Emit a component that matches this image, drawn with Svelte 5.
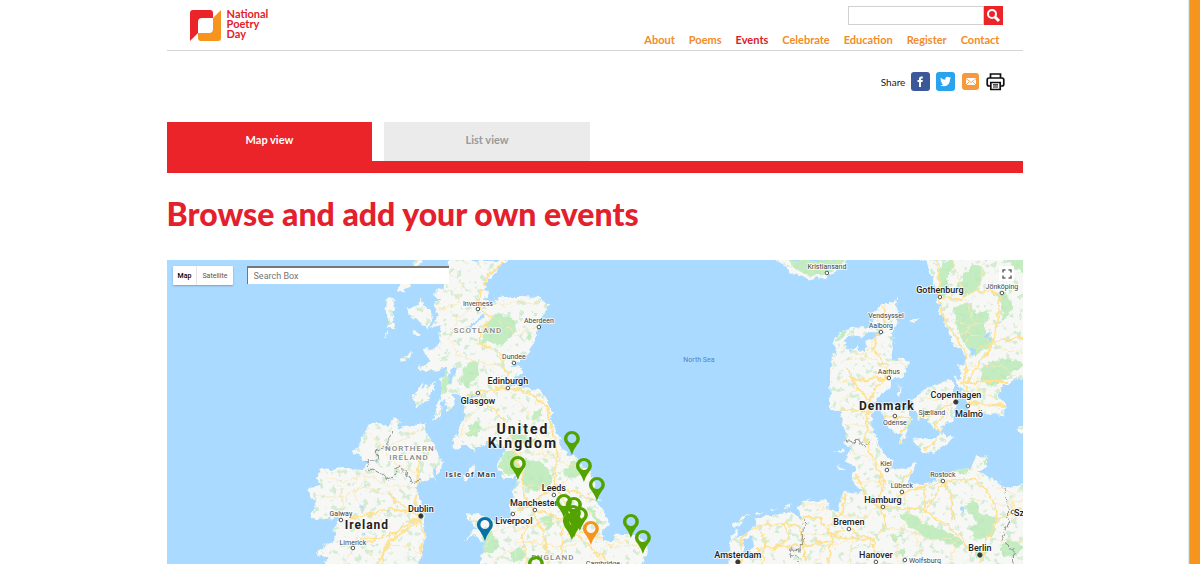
<script lang="ts">
  const nav = ['About', 'Poems', 'Events', 'Celebrate', 'Education', 'Register', 'Contact'];
  let view = $state('Map view');

  // Landmasses, one closed outline each
  const land = [
    // Great Britain
    'M448 260H510L500 266 492 277 485 285 483 290 490 291 484 300 492 301 503 297 520 297 540 298 548 304 548 310 541 320 537 335 530 350 520 362 512 366 522 368 524 374 515 378 502 383 520 387 538 391 545 396 550 408 553 425 560 438 563 449 572 456 580 460 590 472 595 483 597 498 603 502 586 497 600 505 606 515 608 525 603 532 604 540 612 540 614 535 630 533 642 537 648 548 647 556 640 566H480L484 550 484 543 475 535 463 541 466 537 478 528 470 521 467 515 478 513 488 520 500 520 512 515 511 505 512 490 517 487 516 478 520 473 512 478 505 478 499 470 497 462 502 455 508 447 500 446 490 442 480 445 475 452 467 444 455 450 452 440 458 434 461 425 466 415 464 408 467 400 458 393 453 397 454 408 448 411 446 398 442 402 441 414 434 420 437 405 443 390 440 382 447 365 438 372 420 370 418 366 431 362 425 355 423 350 436 348 442 343 438 335 442 325 432 326 438 315 433 303 441 300 434 295 438 288 446 290 446 278Z',
    // Western isles and Skye
    'M416 260H423L418 268 408 271ZM408 274L416 278 404 293 398 290ZM386 298L396 300 393 313 394 328 388 329 387 312ZM407 308L417 306 421 298 426 307 433 315 427 330 419 322 410 316ZM401 359L413 352 411 358 402 362ZM415 330L421 333 419 337 415 335ZM385 334L389 332 386 337ZM416 393L424 382 422 390 436 380 433 393 426 403 416 407 413 399Z',
    // Isle of Man
    'M463 477L470 468 475 465 473 475 467 480Z',
    // Ireland
    'M373 423L386 426 395 418 401 423 397 430 410 425 425 425 428 435 434 445 437 455 443 462 441 470 436 475 437 465 432 472 435 479 420 482 415 488 420 500 422 510 425 520 426 535 423 545 420 566H320L330 560 316 553 323 547 337 538 333 528 342 516 325 520 313 517 312 510 317 503 309 495 310 488 321 485 316 477 322 468 335 470 343 468 363 470 367 462 358 455 350 451 360 447 358 440 365 432Z',
    // Norway and Sweden
    'M773 260L787 266 790 273 810 280 827 277 843 267 848 260ZM920 260L927 263 932 277 937 292 940 312 947 327 953 343 963 352 967 365 957 363 962 377 955 378 960 387 967 398 967 412 973 417 987 413 1003 415 1007 408 998 395 1002 388 1013 380 1026 378V258Z',
    // Jutland and the continental coast
    'M901 295L895 302 898 310 897 322 892 330 893 348 891 359 903 359 909 363 907 370 900 378 892 380 889 388 877 398 873 408 872 418 874 432 878 442 883 454 895 460 890 468 908 470 915 460 918 464 913 472 907 483 923 485 943 477 953 470 973 468 975 455 987 457 987 467 977 472 993 478 1003 488 1026 485V566H728L730 550 732 537 736 528 738 539 752 529 755 521 767 516 793 512 797 519 803 518 798 508 802 502 827 500 829 510 837 512 842 493 863 492 853 483 852 475 856 468 847 462 848 453 852 448 843 442 847 440 843 422 840 412 830 407 832 352 838 356 833 343 840 333 850 328 867 327 873 318 877 310 883 303 892 303Z',
    // Danish islands
    'M882 406L900 405 908 410 912 420 905 435 893 432 885 420ZM912 400L927 388 947 380 954 384 950 393 959 400 953 415 952 422 943 425 940 435 928 421 917 418ZM912 440L933 438 940 434 955 437 942 448 935 453 923 452ZM909 321L918 317 914 323ZM899 384L902 397 899 396ZM899 443L907 430 902 445ZM1018 427L1026 422V436L1018 432Z',
    // Frisian islands
    'M733 525L741 518 752 514 742 521 735 528ZM754 513L764 511 758 515ZM769 511L778 509 772 512ZM784 507L793 505 786 509ZM806 500L812 498 808 501ZM843 449L835 451 844 452ZM838 465L844 469 839 469Z'
  ];

  const woods = [
    'M490 318L500 314 514 320 517 330 509 340 498 345 488 342 479 345 484 332Z',
    'M463 366L474 361 480 366 477 378 467 388 461 380Z', 'M444 371L454 376 448 387 443 396 441 385Z',
    'M470 427L477 422 483 431 477 436 466 436Z', 'M512 432L526 436 538 440 526 446 514 441Z',
    'M500 455L512 449 520 458 517 473 506 476 499 466Z', 'M524 459L541 462 553 475 550 485 532 492 522 480Z',
    'M534 411L543 408 540 417 532 421Z', 'M564 469L572 462 585 466 577 477 565 476Z',
    'M543 518L554 514 554 527 545 532Z', 'M483 534L490 530 500 544 494 553 484 553Z',
    'M508 554L522 548 525 557 513 563Z', 'M588 508L594 509 604 526 596 522Z',
    'M506 290L512 287 511 292ZM525 338L533 332 530 341Z',
    'M787 260H846L838 268 824 274 811 276 797 270Z',
    'M937 277L944 260 954 263 947 280 951 293 944 298ZM963 277L973 263 985 270 978 290 967 298 956 288ZM952 308L970 303 976 315 990 308 984 331 995 343 976 355 963 341 957 328ZM984 365L1005 359 1024 363 1010 374 993 386 981 382ZM990 290L1007 293 1013 310 1001 324 1003 304ZM1002 260H1024V273Z',
    'M834 343L842 332 850 329 841 338ZM838 413L842 420 838 416ZM839 430L843 434 840 438Z',
    'M898 513L910 514 923 522 936 528 952 534 964 543 958 548 942 541 926 538 908 525Z',
    'M963 505L976 501 981 513 997 520 995 535 980 540 969 529 978 523Z',
    'M889 534L902 535 896 544ZM1000 545L1013 539 1024 546 1017 557 1003 556ZM975 549L987 553 976 560ZM899 551L905 548 903 560ZM953 470L964 465 973 469 962 474ZM981 459L988 457 985 466Z'
  ];

  const lakes = [
    'M844 340L852 335 864 337 872 332 884 333 868 341 864 353 856 347 851 353 846 347Z',
    'M743 541L752 536 754 545 749 552 752 560 742 556 745 549Z',
    'M985 336L991 330 989 345ZM970 348L977 352 971 355ZM960 507L966 508 962 515Z',
    'M373 458L379 460 376 465ZM360 503L364 509 361 513ZM388 508L391 511 388 513ZM363 534L367 531 365 537Z',
    'M482 313L469 328 471 329 485 315ZM453 366L447 382 450 383 457 367ZM467 401L472 394 480 397 470 398Z'
  ];

  const highways = [
    'M502 264L490 275 483 287 478 305 490 318 478 341 500 354 507 372 504 388 478 392 464 396M504 388L528 392 547 405 552 432 558 455 554 475 557 490 566 505 563 524 560 564',
    'M478 393L489 405 505 422 513 438 516 460 524 477 524 495 535 515 543 530 548 564M510 514L530 506 553 488 580 493 596 500M514 504L540 511 562 519M535 515L522 535 526 564M566 505L572 530 588 545 610 564M566 535L582 531 604 538',
    'M342 520L365 516 388 508 419 514M419 514L404 507 388 494M420 512L415 499 417 482 419 459 428 454M419 518L396 532 380 538 360 539M396 532L377 564M419 520L386 545 381 564M420 520L425 535 420 553M339 544L353 547 376 540',
    'M883 304L885 321 876 337 875 351 887 366 885 378 873 391 869 405 866 431 866 440 872 455 880 474 882 505M871 400L858 389 850 373 856 380 880 378 889 378M840 409L868 412 890 416 916 419 938 412 956 401M848 368L853 381M940 436L937 425 942 415M910 423L900 433 901 445M925 449L936 441',
    'M937 260L939 282 939 298 943 318 956 337 965 350 967 365 963 383 972 397 968 408M939 298L960 299 978 290 1000 293 998 325 990 348 975 371 967 382M971 403L1006 406M965 382L1010 382 1024 380M976 349L1001 340 1023 338',
    'M882 507L903 492 943 482 972 479 985 488 996 507 995 527 985 544 980 564M882 507L926 510 945 525 960 535 972 553M883 507L885 525 873 540 832 536 820 519 801 517M872 540L849 529 831 536 829 564M882 507L867 500 856 475M943 482L951 495 955 520M882 474L885 490M903 493L926 487 923 510M902 480L911 472M845 493L842 513 829 525',
    'M740 564L742 535 757 525 784 524 790 538 776 547 757 549M784 523L800 527 806 560M755 524L766 540 762 564M776 547L804 546 829 541M997 521L1024 508M873 540L876 564M942 485L926 510'
  ];
  const lanes = [
    'M450 273L463 282 458 302 440 310M477 305L458 319 449 337 456 355 478 362 501 366M478 305L503 303 540 302M539 326L516 336 499 321M505 388L527 411 536 431 551 439M480 404L468 419 458 437M505 423L482 430 460 434M536 431L545 455 558 460 578 468M500 444L516 452 542 455 562 454M512 488L532 486 554 488 573 478M505 519L492 533 485 548M507 528L527 528 548 522 566 520 586 517M515 543L539 542 568 547 591 535 615 547 642 546M495 561L514 548 520 564M600 564L606 545 630 541M560 510L594 514',
    'M370 433L383 447 403 439 420 430M382 446L395 463 418 474M325 479L347 481 368 475 390 486 416 488M337 479L343 500 342 520M319 495L335 498 364 488 388 493M365 514L354 494 367 475M353 547L361 526 388 509M353 547L344 564M387 545L411 546 421 555M358 540L373 557',
    'M840 362L856 358 875 360 888 374M837 382L851 381M858 389L842 397 841 410M868 425L847 426M891 360L907 365M838 345L864 355 876 337M920 397L937 400 954 393M918 410L938 412M946 395L947 420M968 391L1001 397M978 377L979 410M944 318L968 324 998 324M950 332L978 335 1000 348 1023 354M970 365L1002 366 1016 376M953 263L962 289 973 318 965 342M985 260L979 290',
    'M844 450L865 456 880 466M854 483L882 481M801 505L826 505M804 534L832 535M808 520L824 508 841 513 859 518 883 505M814 564L829 545 850 540 861 524M853 538L848 564M902 490L910 513 896 535 899 564M885 527L907 531 934 541 959 535M923 513L916 537 925 564M947 489L966 502 982 500M958 535L949 564M979 473L979 487M995 487L1013 493 1014 520M990 505L1024 502M996 540L1024 541'
  ];
  const borders = [
    'M391 433L388 438 388 447 374 451 380 457 372 459 366 462 369 468 374 471 383 476 390 479 396 473 395 467 400 466 406 471 411 482 420 480',
    'M845 440L852 442 860 441 864 446 870 441',
    'M805 519L803 532 801 550 790 549 789 555 797 557 799 564M1004 489L1008 505 1009 520 1001 539 1013 549 1014 564'
  ];

  type Place = { t: string; x: number; y: number; k: string; dot?: [number, number]; cap?: boolean };
  const places: Place[] = [
    { t: 'Inverness', x: 478, y: 306, k: 'town', dot: [478, 309] },
    { t: 'Aberdeen', x: 539, y: 323, k: 'town', dot: [539, 327] },
    { t: 'Dundee', x: 514, y: 359, k: 'town', dot: [514, 363] },
    { t: 'SCOTLAND', x: 478, y: 333, k: 'region' },
    { t: 'Edinburgh', x: 508, y: 384, k: 'city', dot: [508, 388] },
    { t: 'Glasgow', x: 478, y: 404, k: 'city', dot: [478, 393] },
    { t: 'United', x: 523, y: 434, k: 'country big' },
    { t: 'Kingdom', x: 523, y: 448, k: 'country big' },
    { t: 'NORTHERN', x: 410, y: 451, k: 'region' },
    { t: 'IRELAND', x: 409, y: 460, k: 'region' },
    { t: 'Isle of Man', x: 471, y: 477, k: 'isle' },
    { t: 'Leeds', x: 554, y: 491, k: 'city', dot: [554, 495] },
    { t: 'Manchester', x: 534, y: 506, k: 'city', dot: [535, 510] },
    { t: 'Liverpool', x: 514, y: 524, k: 'city', dot: [513, 514] },
    { t: 'ENGLAND', x: 553, y: 560, k: 'region' },
    { t: 'Cambridge', x: 603, y: 566, k: 'town' },
    { t: 'Dublin', x: 421, y: 512, k: 'city', dot: [421, 516], cap: true },
    { t: 'Galway', x: 341, y: 516, k: 'town', dot: [341, 520] },
    { t: 'Ireland', x: 367, y: 529, k: 'country' },
    { t: 'Limerick', x: 353, y: 545, k: 'town', dot: [353, 548] },
    { t: 'North Sea', x: 699, y: 362, k: 'sea' },
    { t: 'Kristiansand', x: 827, y: 269, k: 'town', dot: [827, 273] },
    { t: 'Gothenburg', x: 940, y: 293, k: 'city', dot: [940, 297] },
    { t: 'Jönköping', x: 1002, y: 289, k: 'town', dot: [1002, 293] },
    { t: 'Vendsyssel', x: 886, y: 318, k: 'town' },
    { t: 'Aalborg', x: 881, y: 328, k: 'town', dot: [881, 332] },
    { t: 'Aarhus', x: 889, y: 374, k: 'town', dot: [889, 378] },
    { t: 'Denmark', x: 887, y: 410, k: 'country' },
    { t: 'Odense', x: 895, y: 425, k: 'town', dot: [895, 416] },
    { t: 'Sjælland', x: 932, y: 415, k: 'town' },
    { t: 'Copenhagen', x: 956, y: 398, k: 'city', dot: [956, 402], cap: true },
    { t: 'Malmö', x: 969, y: 417, k: 'city', dot: [968, 406] },
    { t: 'Kiel', x: 886, y: 466, k: 'town', dot: [887, 470] },
    { t: 'Rostock', x: 943, y: 477, k: 'town', dot: [943, 481] },
    { t: 'Lübeck', x: 902, y: 488, k: 'town', dot: [902, 492] },
    { t: 'Hamburg', x: 883, y: 503, k: 'city', dot: [883, 507] },
    { t: 'Bremen', x: 849, y: 525, k: 'city', dot: [849, 529] },
    { t: 'Hanover', x: 876, y: 558, k: 'city', dot: [876, 562] },
    { t: 'Wolfsburg', x: 925, y: 563, k: 'town', dot: [905, 560] },
    { t: 'Berlin', x: 980, y: 551, k: 'city', dot: [980, 555], cap: true },
    { t: 'Amsterdam', x: 738, y: 558, k: 'city', dot: [738, 562], cap: true },
    { t: 'Szczecin', x: 1032, y: 516, k: 'city', dot: [1013, 512] }
  ];

  // Point of each event pin
  const green = '#53a300';
  const pins: [number, number, string][] = [
    [572, 454, green], [518, 479, green], [584, 481, green], [597, 500, green],
    [574, 520, green], [564, 517, green], [573, 528, green], [580, 530, green], [571, 536, green], [574, 537, green], [572, 539, green],
    [631, 537, green], [643, 553, green], [536, 579, green],
    [591, 544, '#f7941e'], [485, 540, '#0a70a8']
  ];
</script>

<div class="page">
  <div class="content">
    <header>
      <a class="logo" href="#home" aria-label="National Poetry Day">
        <svg width="33" height="33" viewBox="0 0 33 33" aria-hidden="true">
          <path fill="#ea2429" d="M4 1H21Q24 1 24 4V9H13Q9 9 9 13V24L1 32V4Q1 1 4 1Z" />
          <path fill="#f7941e" d="M32 1V29Q32 32 29 32H12Q9 32 9 29V24H20Q24 24 24 20V9Z" />
        </svg>
        <span>National<br />Poetry<br />Day</span>
      </a>
      <div class="tools">
        <form class="search" role="search" onsubmit={(e) => e.preventDefault()}>
          <input type="search" aria-label="Search the site" />
          <button aria-label="Search">
            <svg width="19" height="19" viewBox="0 0 19 19" fill="none" stroke="#fff">
              <circle cx="8" cy="8" r="4" stroke-width="2" />
              <path d="M11 11L15 15" stroke-width="3" />
            </svg>
          </button>
        </form>
        <nav>
          {#each nav as item}
            <a href="#{item.toLowerCase()}" class:current={item === 'Events'}>{item}</a>
          {/each}
        </nav>
      </div>
    </header>

    <div class="share">
      <span>Share</span>
      <a href="#facebook" aria-label="Facebook"><svg viewBox="0 0 19 19"><rect width="19" height="19" rx="3" fill="#3b5998" /><path fill="#fff" d="M8 15V10H6.500V8H8V6.700Q8 4.500 10.300 4.500H11.800V6.400H10.800Q10 6.400 10 7.200V8H11.800L11.500 10H10V15Z" /></svg></a>
      <a href="#twitter" aria-label="Twitter"><svg viewBox="0 0 19 19"><rect width="19" height="19" rx="3" fill="#2aa3ef" /><path fill="#fff" d="M4.500 5.500Q6.500 7.700 9.300 7.700 9 5 11.500 4.800 12.500 4.800 13.200 5.500L14.700 5 14 6.300 15 6.100 14 7.300Q14 14 8 14.200 6 14.200 4.300 13.200 6.300 13.200 7.300 12.300 5.700 12 5.300 10.700H6.300Q4.600 10 4.600 8.300L5.600 8.600Q4.100 7.400 4.500 5.500Z" /></svg></a>
      <a href="#email" aria-label="Email"><svg viewBox="0 0 19 19"><rect x="1" y="1" width="17" height="17" rx="3" fill="#f7993a" /><rect x="5" y="6" width="10" height="7" rx="1" fill="#fff" /><path d="M5 6.500L10 10.500 15 6.500M5 13L8.500 9.500M15 13L11.500 9.500" fill="none" stroke="#f7993a" stroke-width=".8" /></svg></a>
      <button class="print" aria-label="Print"><svg viewBox="0 0 19 19" fill="none" stroke="#111" stroke-width="1.700"><path d="M4.500 6V2H14.500V6M4 14H3Q1.200 14 1.200 12V8Q1.200 6 3 6H16Q17.800 6 17.800 8V12Q17.800 14 16 14H15" /><path d="M4.800 10.500H14.200V17.500H4.800Z" /><path d="M7 12.800H12M7 15H12" stroke-width="1.200" /></svg></button>
    </div>

    <div class="tabs" role="tablist">
      {#each ['Map view', 'List view'] as name}
        <button role="tab" aria-selected={view === name} class:active={view === name} onclick={() => (view = name)}>{name}</button>
      {/each}
    </div>

    <h1>Browse and add your own events</h1>

    <div class="map">
      <svg class="chart" viewBox="167 260 857 304" preserveAspectRatio="xMidYMin slice" role="img" aria-label="Map of events">
        <defs>
          <filter id="coast" x="-2%" y="-2%" width="104%" height="104%" color-interpolation-filters="sRGB">
            <feTurbulence type="fractalNoise" baseFrequency=".14" numOctaves="3" seed="8" />
            <feDisplacementMap in="SourceGraphic" scale="8" xChannelSelector="R" yChannelSelector="G" />
          </filter>
          <filter id="relief" x="0" y="0" width="100%" height="100%" color-interpolation-filters="sRGB">
            <feTurbulence type="fractalNoise" baseFrequency=".16" numOctaves="3" seed="21" />
            <feColorMatrix values="0 0 0 0 .74  0 0 0 0 .9  0 0 0 0 .74  0 9 0 0 -5.3" result="specks" />
            <feComposite in="specks" in2="SourceGraphic" operator="in" />
          </filter>
          <clipPath id="inland">
            {#each land as d}<path {d} />{/each}
          </clipPath>
        </defs>
        <rect x="167" y="260" width="857" height="304" fill="#aadaff" />
        <g filter="url(#coast)">
          <g fill="#f7f7f5">{#each land as d}<path {d} />{/each}</g>
          <g clip-path="url(#inland)">
            <g fill="#c3ecc0">{#each woods as d}<path {d} />{/each}</g>
          </g>
        </g>
        <g opacity=".6" filter="url(#relief)">{#each land as d}<path {d} />{/each}</g>
        <g fill="#aadaff" filter="url(#coast)">{#each lakes as d}<path {d} />{/each}</g>
        <g clip-path="url(#inland)" fill="none" stroke-linejoin="round">
          <g filter="url(#coast)">
            <g stroke="#fbe9b4" stroke-width=".9">{#each lanes as d}<path {d} />{/each}</g>
            <g stroke="#fde293" stroke-width="1.800">{#each highways as d}<path {d} />{/each}</g>
          </g>
        </g>
        <g fill="none" stroke="#777" stroke-width=".8" filter="url(#coast)">{#each borders as d}<path {d} />{/each}</g>
        {#each places as p}
          {#if p.dot}
            <circle cx={p.dot[0]} cy={p.dot[1]} r={p.cap ? 2.2 : 1.8} fill={p.cap ? '#333' : '#fff'} stroke="#444" stroke-width=".9" />
          {/if}
          <text class={p.k} x={p.x} y={p.y}>{p.t}</text>
        {/each}
        {#each pins as [x, y, color]}
          <path transform="translate({x} {y})" fill={color} fill-rule="evenodd" d="M0 1Q-2-5-5-9Q-8-12-8-15A8 8 0 0 1 8-15Q8-12 5-9Q2-5 0 1ZM0-20A4.500 4.500 0 1 0 0-11A4.500 4.500 0 1 0 0-20Z" />
        {/each}
      </svg>
      <div class="controls">
        <div class="types">
          <button class="on">Map</button>
          <button>Satellite</button>
        </div>
        <input type="text" placeholder="Search Box" aria-label="Search the map" />
        <button class="full" aria-label="Full screen">
          <svg width="10" height="10" viewBox="0 0 10 10" fill="none" stroke="#666" stroke-width="1.500"><path d="M1 3.500V1H3.500M6.500 1H9V3.500M9 6.500V9H6.500M3.500 9H1V6.500" /></svg>
        </button>
      </div>
    </div>
  </div>
</div>

<style>
  :global(body) { margin: 0; background: #fff; }
  .page {
    box-sizing: border-box;
    min-height: 100vh;
    display: flex;
    border-right: 10px solid #f7941e;
    box-shadow: inset -1px 0 #b9b5a5, inset -2px 0 #d9edf5;
    font-family: Lato, "Open Sans", sans-serif;
  }
  button, input { font: inherit; margin: 0; padding: 0; border: 0; border-radius: 0; box-sizing: border-box; }
  button { cursor: pointer; }
  a { text-decoration: none; }
  .content { width: 72%; min-width: 560px; margin: 0 auto; display: flex; flex-direction: column; }

  header {
    display: flex;
    justify-content: space-between;
    padding: 6px 20px 3px 22px;
    border-bottom: 1px solid #d5d5d5;
  }
  .logo { display: flex; gap: 5px; padding-top: 3px; color: #e3202b; font-size: 11px; line-height: 10px; font-weight: 700; }
  .tools { display: flex; flex-direction: column; align-items: flex-end; gap: 8px; }
  .search { display: flex; }
  .search input { width: 136px; height: 19px; border: 1px solid #d0d0d0; background: #fff; padding: 0 4px; font-size: 11px; }
  .search button { width: 19px; height: 19px; background: #ea2429; }
  .search svg { display: block; }
  nav { display: flex; gap: 14px; padding-right: 4px; font-size: 11px; line-height: 14px; font-weight: 700; }
  nav a { color: #f28c28; }
  nav .current { color: #d9202b; }

  .share { display: flex; justify-content: flex-end; align-items: center; gap: 6px; padding: 21px 18px 31px 0; font-size: 10px; color: #222; }
  .share a, .share button { width: 19px; height: 19px; background: none; }
  .share svg { display: block; width: 19px; height: 19px; }

  .tabs { display: flex; gap: 12px; border-bottom: 12px solid #ea2429; }
  .tabs button { width: 24%; padding: 11px 0 14px; background: #ebebeb; color: #999; font-size: 11px; line-height: 14px; font-weight: 700; }
  .tabs .active { background: #ea2429; color: #fff; }

  h1 { margin: 21px 0 26px; color: #e3202b; font-size: 32px; line-height: 40px; font-weight: 900; }

  .map { flex: 1; min-height: 304px; display: grid; overflow: hidden; font-family: Roboto, sans-serif; }
  .chart, .controls { grid-area: 1 / 1; }
  .chart { width: 100%; height: 100%; min-height: 0; display: block; }
  .controls { display: flex; align-items: flex-start; padding: 6px 9px 0 6px; z-index: 1; }
  .types { display: flex; background: #fff; border-radius: 1px; box-shadow: 0 1px 2px #0004; }
  .types button { height: 19px; padding: 0 5px; background: none; color: #555; font-size: 7px; }
  .types .on { color: #000; font-weight: 500; border-right: 1px solid #e6e6e6; }
  .controls input {
    width: 202px;
    height: 18px;
    margin-left: 14px;
    padding: 0 6px;
    border-top: 2px solid #767676;
    border-left: 1px solid #767676;
    background: #fff;
    font-size: 9px;
  }
  .controls input::placeholder { color: #757575; opacity: 1; }
  .full { width: 15px; height: 15px; margin-left: auto; display: grid; place-items: center; background: #fff; }

  text { text-anchor: middle; fill: #555; stroke: #ffffffb0; stroke-width: 2px; paint-order: stroke; stroke-linejoin: round; }
  .town { font-size: 7px; fill: #444; }
  .city { font-size: 9px; fill: #222; font-weight: 500; }
  .country { font-size: 12px; fill: #222; font-weight: 700; letter-spacing: 1px; }
  .big { font-size: 14px; letter-spacing: 2px; }
  .region { font-size: 8px; fill: #888; font-weight: 500; letter-spacing: 1px; }
  .isle { font-size: 8px; fill: #333; font-weight: 500; letter-spacing: 1px; }
  .sea { font-size: 7px; fill: #4d87c7; stroke: none; }
</style>
